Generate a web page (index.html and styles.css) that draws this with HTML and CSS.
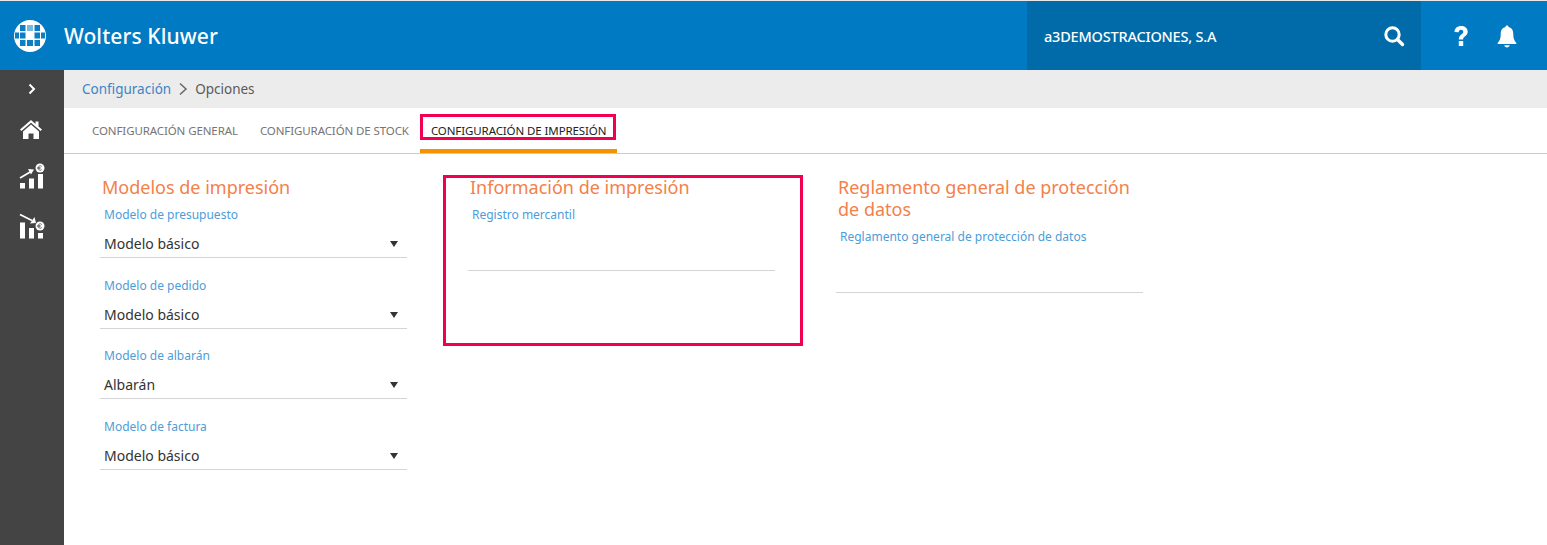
FILE: index.html
```html
<!DOCTYPE html>
<html lang="es">
<head>
<meta charset="utf-8">
<title>Wolters Kluwer</title>
<link rel="stylesheet" href="styles.css">
</head>
<body>
<header class="topbar">
  <div class="brand">
    <svg class="logo" viewBox="0 0 32 32" width="32" height="32">
      <defs><clipPath id="c"><circle cx="16" cy="16" r="16"/></clipPath></defs>
      <g clip-path="url(#c)">
        <rect width="32" height="32" fill="#fff"/>
        <g fill="#0a7fc4">
          <rect x="6" y="5" width="5.5" height="6"/><rect x="20.5" y="5" width="5.5" height="6"/>
          <rect x="13" y="5" width="6" height="0"/>
          <rect x="1" y="12.5" width="4" height="6"/><rect x="6" y="12.5" width="5.5" height="6"/><rect x="20.5" y="12.5" width="5.5" height="6"/><rect x="27" y="12.5" width="4" height="6"/>
          <rect x="6" y="20" width="5.5" height="6"/><rect x="13" y="20" width="6" height="6"/><rect x="20.5" y="20" width="5.5" height="6"/>
          <rect x="13" y="5" width="6" height="6" fill="#0a7fc4" opacity=".55"/>
        </g>
      </g>
    </svg>
    <span class="brand-name">Wolters Kluwer</span>
  </div>
  <div class="company">
    <span class="company-name">a3DEMOSTRACIONES, S.A</span>
    <svg class="ico" viewBox="0 0 22 22" width="22" height="22"><circle cx="9.5" cy="9.5" r="6.7" fill="none" stroke="#fff" stroke-width="3"/><path d="M14.5 14.5l5 5" stroke="#fff" stroke-width="3.4" stroke-linecap="round"/></svg>
  </div>
  <div class="actions">
    <svg viewBox="0 0 18 24" width="18" height="24"><path d="M2.5 8C2.5 4.2 5.4 2 9 2s6.7 2 6.7 5.8c0 4.4-4.6 4.4-4.6 7.7H6.8c0-5.300 4.500-5.200 4.500-7.600 0-1.400-1-2.200-2.300-2.200-1.400 0-2.300 1-2.300 2.500z" fill="#fff"/><rect x="6.800" y="17" width="4.400" height="5" fill="#fff"/></svg>
    <svg viewBox="0 0 24 24" width="24" height="24"><path d="M12 1.500c1 0 1.600.7 1.600 1.600 3.400.8 4.700 3.500 4.700 7.400 0 4 .9 6.200 3 8.200v1.300H2.700v-1.300c2.100-2 3-4.200 3-8.200 0-3.900 1.300-6.600 4.700-7.400 0-.9.6-1.600 1.600-1.600z" fill="#fff"/><path d="M9.300 21.300h5.400c-.3 1.300-1.300 2.100-2.700 2.100s-2.400-.8-2.700-2.100z" fill="#fff"/></svg>
  </div>
</header>
<div class="body">
  <aside class="sidebar">
    <svg class="chev" viewBox="0 0 10 12" width="10" height="12"><path d="M2.500 1.500L7 6l-4.500 4.500" fill="none" stroke="#fff" stroke-width="2"/></svg>
    <svg class="nav home" viewBox="0 0 24 20" width="24" height="20"><path d="M12 1L1 10.500l1.400 1.500L12 3.700 21.600 12l1.400-1.500-3.500-3V2.500h-3v2.400z" fill="#fff"/><path d="M12 5.500L4 12.400V20h5.500v-5.500h5V20H20v-7.600z" fill="#fff"/></svg>
    <svg class="nav" viewBox="0 0 26 26" width="26" height="26">
      <circle cx="21" cy="5" r="4.500" fill="#fff"/><path d="M22.800 3.500a2.200 2.200 0 1 0 0 3M18.500 4.600h3M18.500 5.600h3" fill="none" stroke="#555" stroke-width=".8"/>
      <rect x="1" y="20" width="5" height="5.500" fill="#fff"/><rect x="10" y="15.500" width="5" height="10" fill="#fff"/><rect x="19" y="11" width="5" height="14.500" fill="#fff"/>
      <path d="M1 15l11-6.500" stroke="#fff" stroke-width="1.800"/><path d="M9 6l6 .5-3 5z" fill="#fff"/>
    </svg>
    <svg class="nav" viewBox="0 0 26 26" width="26" height="26">
      <circle cx="21" cy="13" r="4.500" fill="#fff"/><path d="M22.800 11.500a2.200 2.200 0 1 0 0 3M18.500 12.600h3M18.500 13.600h3" fill="none" stroke="#555" stroke-width=".8"/>
      <rect x="1" y="9.500" width="5" height="16" fill="#fff"/><rect x="10" y="15" width="5" height="10.500" fill="#fff"/><rect x="19" y="20" width="5" height="5.500" fill="#fff"/>
      <path d="M1 1.500l12 6" stroke="#fff" stroke-width="1.800"/><path d="M15.500 4l1.500 6-6 .5z" fill="#fff"/>
    </svg>
  </aside>
  <main class="main">
    <nav class="crumbs">
      <a class="crumb-link">Configuración</a>
      <svg viewBox="0 0 10 14" width="10" height="14"><path d="M2 1.500L8 7l-6 5.500" fill="none" stroke="#666" stroke-width="1.500"/></svg>
      <span>Opciones</span>
    </nav>
    <div class="tabs">
      <span class="tab">CONFIGURACIÓN GENERAL</span>
      <span class="tab">CONFIGURACIÓN DE STOCK</span>
      <span class="tab active">CONFIGURACIÓN DE IMPRESIÓN<i class="mark mark-tab"></i></span>
    </div>
    <div class="columns">
      <section class="col">
        <h2>Modelos de impresión</h2>
        <div class="field"><label>Modelo de presupuesto</label><div class="select">Modelo básico<i class="caret"></i></div></div>
        <div class="field"><label>Modelo de pedido</label><div class="select">Modelo básico<i class="caret"></i></div></div>
        <div class="field"><label>Modelo de albarán</label><div class="select">Albarán<i class="caret"></i></div></div>
        <div class="field"><label>Modelo de factura</label><div class="select">Modelo básico<i class="caret"></i></div></div>
      </section>
      <section class="col">
        <i class="mark mark-box"></i>
        <h2>Información de impresión</h2>
        <div class="field"><label>Registro mercantil</label><div class="input tall"></div></div>
      </section>
      <section class="col">
        <h2>Reglamento general de protección de datos</h2>
        <div class="field"><label>Reglamento general de protección de datos</label><div class="input tall"></div></div>
      </section>
    </div>
  </main>
</div>
</body>
</html>
```
FILE: styles.css
```css
* { box-sizing: border-box; }
html, body { margin: 0; height: 100%; }
body { font-family: "Noto Sans", "Open Sans", sans-serif; background: #fff; color: #333; overflow: hidden; }
.topbar { height: 69px; margin-top: 1px; background: #007ac3; display: flex; align-items: stretch; color: #fff; box-shadow: 0 -1px 0 #e8e8e8; }
.brand { width: 1027px; display: flex; align-items: center; padding-left: 14px; }
.logo { flex: none; }
.brand-name { margin-left: 18px; font-size: 21px; font-weight: 500; letter-spacing: .1px; }
.company { width: 394px; background: #006ba8; display: flex; align-items: center; justify-content: space-between; padding: 0 16px 0 17px; }
.company-name { font-size: 14.500px; font-weight: 500; letter-spacing: -.2px; }
.actions { flex: 1; display: flex; align-items: center; gap: 25px; padding-left: 31px; }
.body { display: flex; height: 475px; }
.sidebar { width: 64px; background: #444; display: flex; flex-direction: column; align-items: center; padding-top: 13px; flex: none; }
.nav { margin-top: 24px; }
.nav.home { margin-top: 24px; margin-left: -2px; }
.main { flex: 1; min-width: 0; }
.crumbs { height: 38px; background: #ececec; display: flex; align-items: center; gap: 7px; padding-left: 18px; font-size: 13.500px; color: #5a5a5a; }
.crumb-link { color: #3d84c6; }
.tabs { height: 46px; display: flex; padding-left: 17px; border-bottom: 1px solid #ccc; font-size: 11.500px; letter-spacing: -.1px; color: #757575; }
.tab { position: relative; height: 45px; padding: 15px 11px 0; }
.tab.active { color: #222; border-bottom: 4px solid #f59200; }
.columns { display: grid; grid-template-columns: repeat(3, 307px); column-gap: 61px; padding: 22px 0 0 36px; }
.col { position: relative; }
h2 { margin: 0 0 8px; padding-left: 2px; font-size: 18px; line-height: 22px; font-weight: 400; color: #f4804a; }
.field { height: 70.500px; }
label { display: block; padding-left: 4px; font-size: 12px; line-height: 18px; color: #4d9dd8; }
.select { position: relative; height: 34px; padding: 10px 4px 0; line-height: 20px; font-size: 14px; color: #333; border-bottom: 1px solid #d4d4d4; }
.input { border-bottom: 1px solid #d4d4d4; }
.tall { height: 47px; }
.caret { position: absolute; right: 9px; top: 17px; border-left: 4.500px solid transparent; border-right: 4.500px solid transparent; border-top: 6px solid #333; }
.mark { position: absolute; border: 3px solid #f0004f; pointer-events: none; }
.mark-tab { left: 0; right: 1px; top: 6px; height: 26px; }
.mark-box { left: -25px; top: -1px; width: 360px; height: 171px; }
```
